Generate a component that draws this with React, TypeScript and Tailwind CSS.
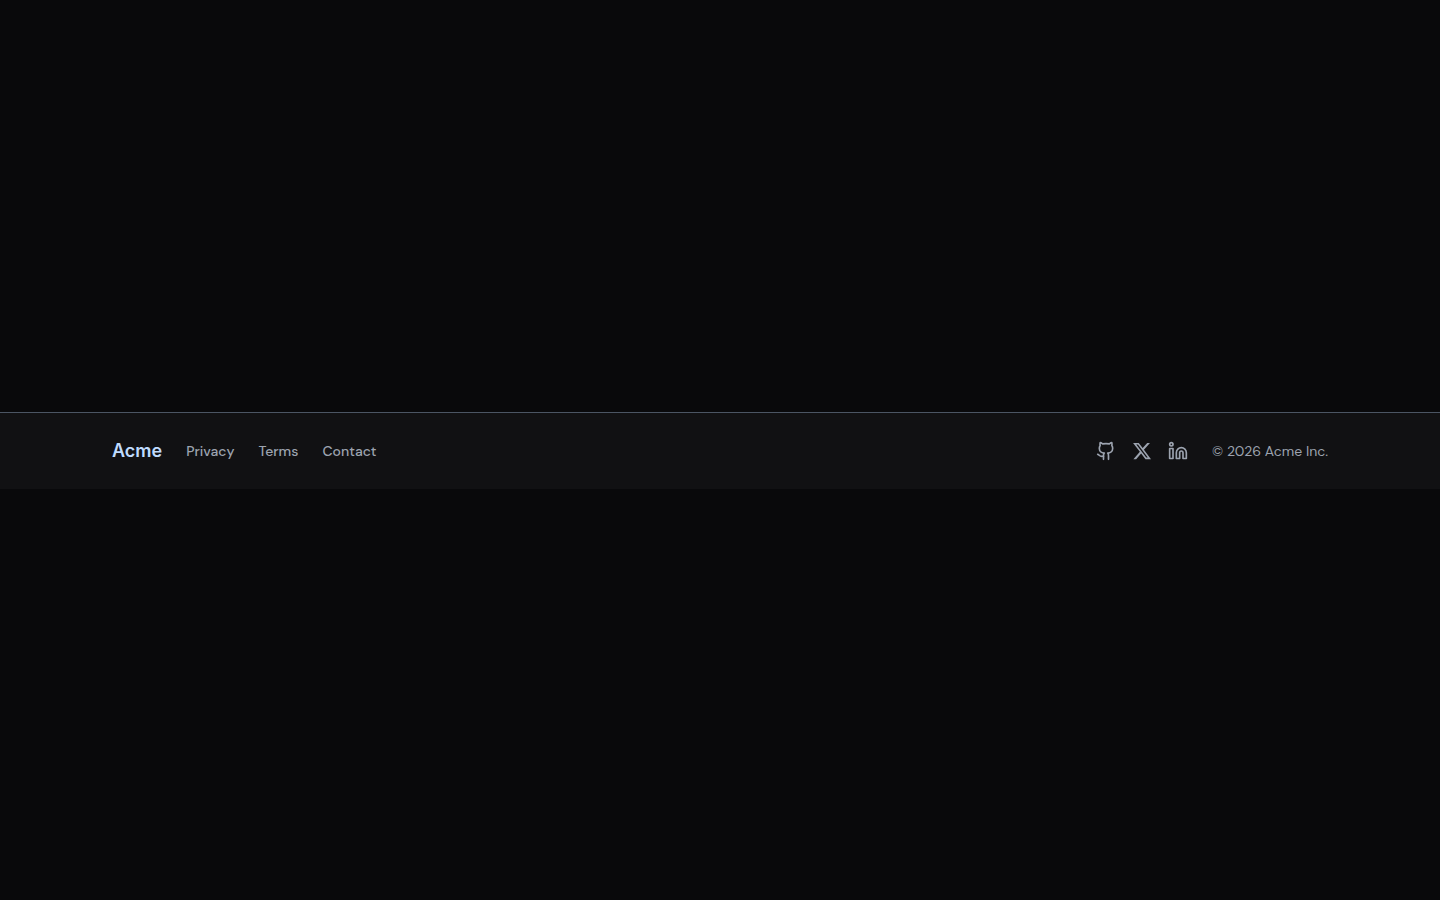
import { Github, Linkedin } from "lucide-react";

const links = ["Privacy", "Terms", "Contact"];

function XLogo() {
  return (
    <svg viewBox="0 0 24 24" fill="currentColor" className="size-5" aria-hidden="true">
      <path d="M18.244 2.25h3.308l-7.227 8.26 8.502 11.24H16.17l-5.214-6.817L4.99 21.75H1.68l7.73-8.835L1.254 2.25H8.08l4.713 6.231zm-1.161 17.52h1.833L7.084 4.126H5.117z" />
    </svg>
  );
}

const socials = [
  { label: "GitHub", icon: <Github className="size-5" /> },
  { label: "X", icon: <XLogo /> },
  { label: "LinkedIn", icon: <Linkedin className="size-5" /> },
];

export default function App() {
  return (
    <div className="flex min-h-screen flex-col justify-center bg-[#09090b] font-['DM_Sans','Inter',sans-serif]">
      <footer className="border-t border-[#4b5563] bg-[#111113] text-[#9ca3af]">
        <div className="mx-auto flex max-w-7xl flex-wrap items-center justify-between gap-6 px-8 py-6">
          <div className="flex items-center gap-6">
            <a href="#" className="font-['Inter',sans-serif] text-lg font-semibold text-[#bfdbfe]">
              Acme
            </a>
            <nav className="flex gap-6" aria-label="Footer">
              {links.map((link) => (
                <a key={link} href="#" className="text-sm font-medium">
                  {link}
                </a>
              ))}
            </nav>
          </div>
          <div className="flex items-center gap-6">
            <div className="flex gap-4">
              {socials.map(({ label, icon }) => (
                <a key={label} href="#" aria-label={label}>
                  {icon}
                </a>
              ))}
            </div>
            <p className="text-sm">© 2026 Acme Inc.</p>
          </div>
        </div>
      </footer>
    </div>
  );
}
